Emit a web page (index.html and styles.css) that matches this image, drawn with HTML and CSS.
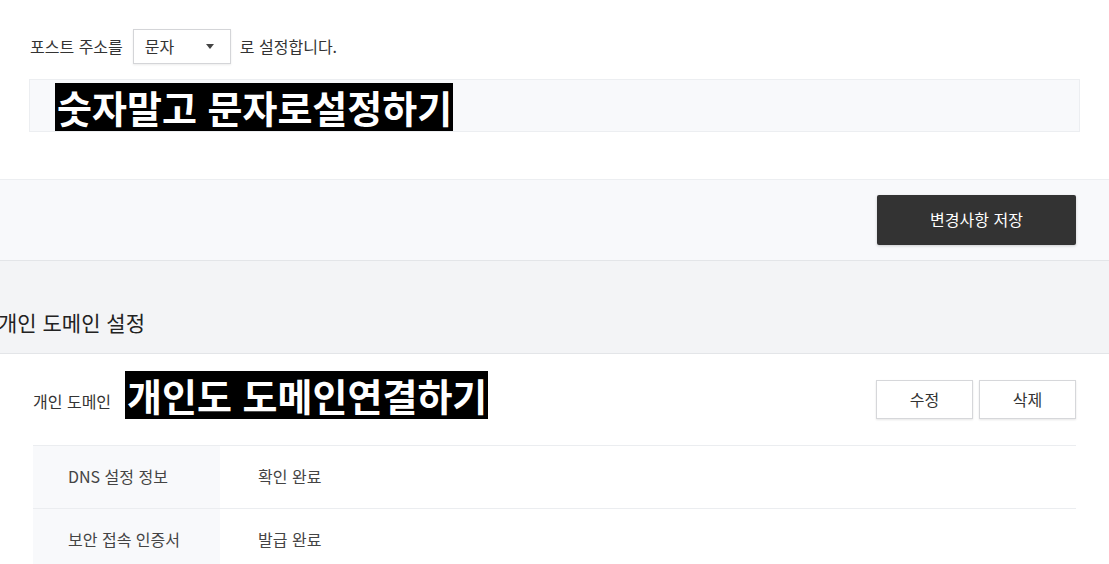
FILE: index.html
```html
<!DOCTYPE html>
<html lang="ko">
<head>
<meta charset="utf-8">
<link rel="stylesheet" href="styles.css">
</head>
<body>
<section class="post-url">
  <div class="url-row">
    <span class="txt">포스트 주소를</span>
    <div class="select">
      <span>문자</span>
      <svg class="caret" width="8" height="5" viewBox="0 0 8 5"><path d="M0 0H8L4 5Z" fill="#444"/></svg>
    </div>
    <span class="txt">로 설정합니다.</span>
  </div>
  <div class="preview">
    <span class="tag">숫자말고 문자로설정하기</span>
  </div>
</section>

<section class="save-bar">
  <button class="btn-save">변경사항 저장</button>
</section>

<section class="sec-head">
  <h2>개인 도메인 설정</h2>
</section>

<section class="domain">
  <div class="domain-row">
    <span class="dlabel">개인 도메인</span>
    <span class="tag">개인도 도메인연결하기</span>
    <div class="actions">
      <button class="btn-line">수정</button>
      <button class="btn-line">삭제</button>
    </div>
  </div>
  <div class="info">
    <div class="info-row">
      <div class="th">DNS 설정 정보</div>
      <div class="td">확인 완료</div>
    </div>
    <div class="info-row">
      <div class="th">보안 접속 인증서</div>
      <div class="td">발급 완료</div>
    </div>
  </div>
</section>
</body>
</html>
```

FILE: styles.css
```css
* { box-sizing: border-box; }
html, body {
  margin: 0;
  background: #fff;
  font-family: "Noto Sans CJK KR", "Noto Sans", sans-serif;
  color: #333;
  overflow: hidden;
}
button { font-family: inherit; cursor: pointer; }

.post-url {
  height: 179px;
  padding: 29px 29px 0 29px;
}
.url-row {
  display: flex;
  align-items: center;
  height: 35px;
  font-size: 16px;
  padding-left: 1px;
}
.url-row .txt { color: #333; line-height: 33px; }
.select {
  width: 98px;
  height: 35px;
  margin: 0 9px 0 10px;
  border: 1px solid #d4d5d8;
  box-shadow: 0 1px 2px rgba(0,0,0,0.08);
  display: flex;
  align-items: center;
  justify-content: space-between;
  padding: 0 16px 2px 11px;
  color: #333;
  background: #fff;
}
.caret { margin-top: 2px; }

.preview {
  margin-top: 15px;
  height: 53px;
  background: #f8f9fb;
  border: 1px solid #eceef1;
  padding: 3px 0 0 25px;
}
.tag {
  display: inline-block;
  background: #000;
  color: #fff;
  font-weight: 700;
  font-size: 38px;
  line-height: 48px;
  height: 48px;
  padding: 0 1px 0 2px;
  white-space: nowrap;
}

.save-bar {
  border-top: 1px solid #eceef1;
  border-bottom: 1px solid #e3e5e8;
  background: #f8f9fb;
  height: 82px;
  padding: 15px 33px 0 0;
  display: flex;
  justify-content: flex-end;
}
.btn-save {
  width: 199px;
  height: 50px;
  background: #333;
  color: #fff;
  border: none;
  border-radius: 2px;
  font-size: 16px;
  padding-bottom: 3px;
  box-shadow: 0 1px 3px rgba(0,0,0,0.18);
}

.sec-head {
  background: #f3f4f6;
  height: 93px;
  border-bottom: 1px solid #e3e5e8;
  padding-top: 45px;
}
.sec-head h2 {
  margin: 0 0 0 -2px;
  font-size: 21px;
  font-weight: 400;
  line-height: 32px;
  color: #222;
}

.domain {
  padding: 17px 33px 0 33px;
}
.domain-row {
  display: flex;
  align-items: flex-end;
  height: 48px;
}
.dlabel {
  font-size: 16px;
  line-height: 36px;
  color: #333;
  margin-right: 14px;
}
.actions {
  margin-left: auto;
  display: flex;
  gap: 6px;
}
.btn-line {
  width: 97px;
  height: 39px;
  background: #fff;
  border: 1px solid #d6d7da;
  border-radius: 0;
  box-shadow: 0 1px 2px rgba(0,0,0,0.1);
  font-size: 16px;
  padding-bottom: 3px;
  color: #333;
}

.info {
  margin-top: 26px;
  border-top: 1px solid #ebedf0;
}
.info-row {
  display: flex;
  height: 63px;
  border-bottom: 1px solid #ebedf0;
  font-size: 16px;
  color: #444;
}
.th {
  width: 187px;
  background: #f8f9fb;
  padding: 0 0 3px 35px;
  display: flex;
  align-items: center;
}
.td {
  padding: 0 0 3px 38px;
  display: flex;
  align-items: center;
}
```
